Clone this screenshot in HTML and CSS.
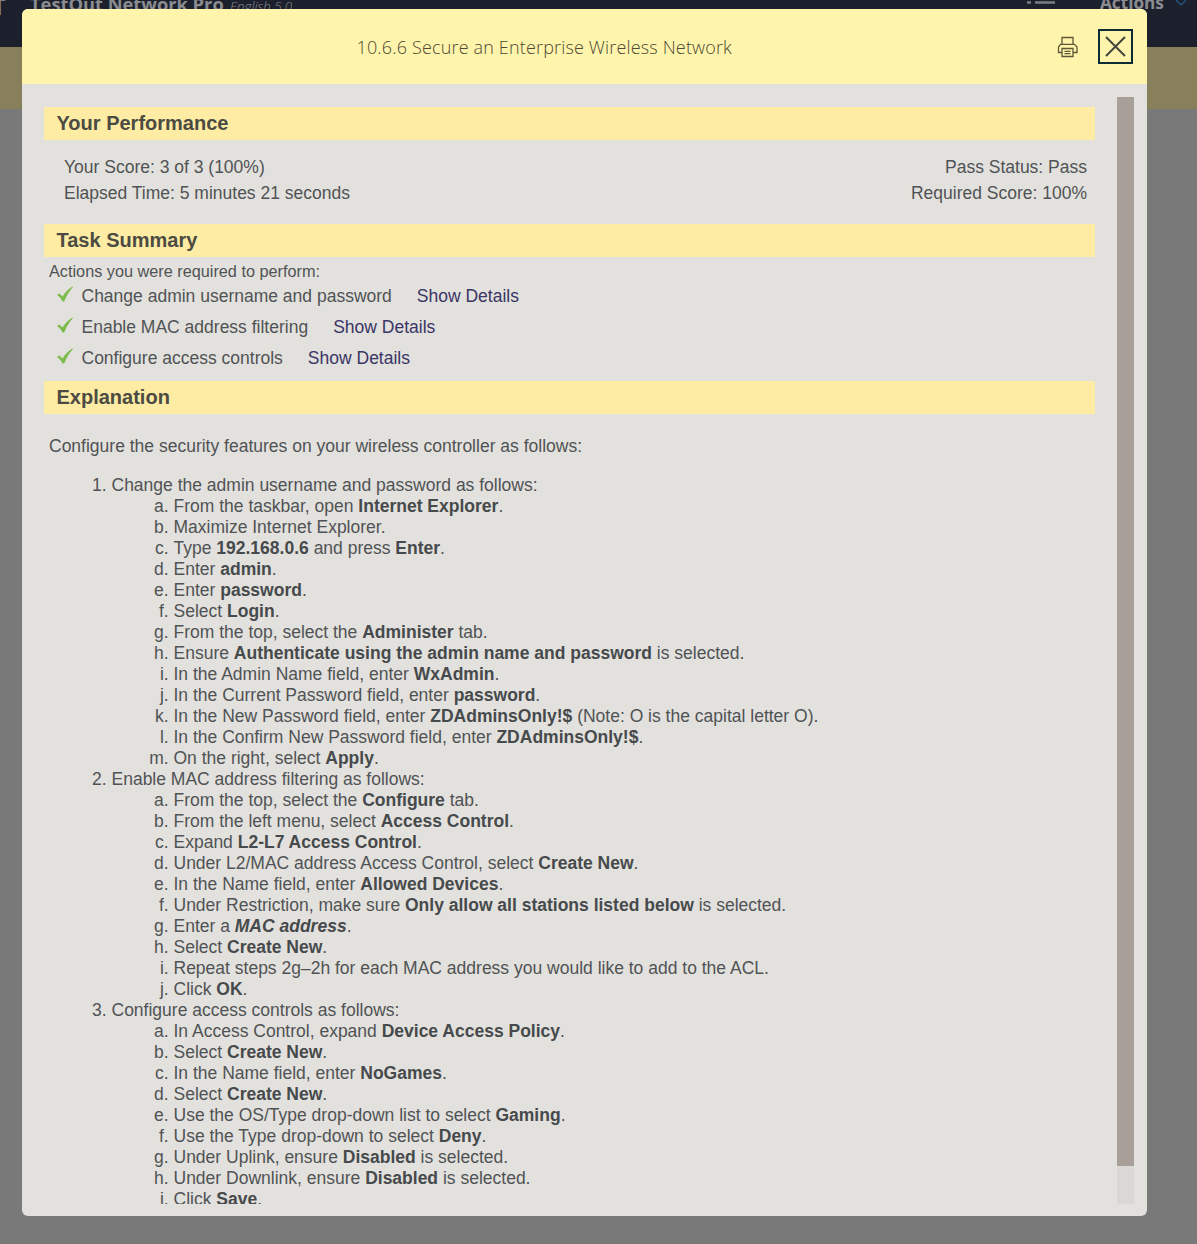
FILE: index.html
```html
<!DOCTYPE html>
<html lang="en">
<head>
<meta charset="utf-8">
<title>10.6.6 Secure an Enterprise Wireless Network</title>
<link rel="stylesheet" href="styles.css">
</head>
<body>
<div class="page">
  <header class="topbar">
    <span class="topbar-mark">T</span>
    <span class="brand">TestOut Network Pro</span>
    <span class="edition">English 5.0</span>
    <svg class="menu-icon" width="28" height="16" viewBox="0 0 28 16"><path d="M0 14.5h4M8 14.5h20" stroke="#7c7e83" stroke-width="2.5"/></svg>
    <span class="actions">Actions</span>
    <svg class="chevron" width="12" height="8" viewBox="0 0 12 8" fill="none"><path d="M1 1l5 5 5-5" stroke="#24507a" stroke-width="1.5"/></svg>
  </header>
  <div class="band"></div>
</div>
<main class="modal">
  <header class="modal-header">
    <h1 class="modal-title">10.6.6 Secure an Enterprise Wireless Network</h1>
    <svg class="print" width="22" height="22" viewBox="0 0 22 22" fill="none" stroke="#5c5736" stroke-width="1.3"><path d="M5 8V1.500h11V8M5 16.500H1.500v-5.500L3.500 8.300h14L20 11v5.500h-4"/><path d="M5 12.500h11v8H5zM7.500 15.300h6M7.500 17.700h6"/></svg>
    <button class="close" aria-label="Close"><svg width="21" height="21" viewBox="0 0 21 21"><path d="M1 1l19 19M20 1L1 20" stroke="#45453f" stroke-width="2"/></svg></button>
  </header>
  <div class="modal-body">
    <div class="content">
      <h2 class="section">Your Performance</h2>
      <div class="scores">
        <div>Your Score: 3 of 3 (100%)<br>Elapsed Time: 5 minutes 21 seconds</div>
        <div class="scores-right">Pass Status: Pass<br>Required Score: 100%</div>
      </div>
      <h2 class="section">Task Summary</h2>
      <p class="required">Actions you were required to perform:</p>
      <ul class="tasks">
        <li class="task"><svg class="check" width="17" height="16" viewBox="0 0 17 16"><path d="M0 9L2.500 7.500l3 3C8.300 6 12 2.500 15.500.5L16 1C12.500 5 9.500 9.500 7.200 15.500H5.500C4 12.500 2.500 10.500 0 9z" fill="#7bbb4b"/></svg><span>Change admin username and password</span><a class="details">Show Details</a></li>
        <li class="task"><svg class="check" width="17" height="16" viewBox="0 0 17 16"><path d="M0 9L2.500 7.500l3 3C8.300 6 12 2.500 15.500.5L16 1C12.500 5 9.500 9.500 7.200 15.500H5.500C4 12.500 2.500 10.500 0 9z" fill="#7bbb4b"/></svg><span>Enable MAC address filtering</span><a class="details">Show Details</a></li>
        <li class="task"><svg class="check" width="17" height="16" viewBox="0 0 17 16"><path d="M0 9L2.500 7.500l3 3C8.300 6 12 2.500 15.500.5L16 1C12.500 5 9.500 9.500 7.200 15.500H5.500C4 12.500 2.500 10.500 0 9z" fill="#7bbb4b"/></svg><span>Configure access controls</span><a class="details">Show Details</a></li>
      </ul>
      <h2 class="section">Explanation</h2>
      <p class="intro">Configure the security features on your wireless controller as follows:</p>
      <ol class="steps">
        <li>Change the admin username and password as follows:
          <ol class="substeps">
            <li>From the taskbar, open <b>Internet Explorer</b>.</li>
            <li>Maximize Internet Explorer.</li>
            <li>Type <b>192.168.0.6</b> and press <b>Enter</b>.</li>
            <li>Enter <b>admin</b>.</li>
            <li>Enter <b>password</b>.</li>
            <li>Select <b>Login</b>.</li>
            <li>From the top, select the <b>Administer</b> tab.</li>
            <li>Ensure <b>Authenticate using the admin name and password</b> is selected.</li>
            <li>In the Admin Name field, enter <b>WxAdmin</b>.</li>
            <li>In the Current Password field, enter <b>password</b>.</li>
            <li>In the New Password field, enter <b>ZDAdminsOnly!$</b> (Note: O is the capital letter O).</li>
            <li>In the Confirm New Password field, enter <b>ZDAdminsOnly!$</b>.</li>
            <li>On the right, select <b>Apply</b>.</li>
          </ol>
        </li>
        <li>Enable MAC address filtering as follows:
          <ol class="substeps">
            <li>From the top, select the <b>Configure</b> tab.</li>
            <li>From the left menu, select <b>Access Control</b>.</li>
            <li>Expand <b>L2-L7 Access Control</b>.</li>
            <li>Under L2/MAC address Access Control, select <b>Create New</b>.</li>
            <li>In the Name field, enter <b>Allowed Devices</b>.</li>
            <li>Under Restriction, make sure <b>Only allow all stations listed below</b> is selected.</li>
            <li>Enter a <b><i>MAC address</i></b>.</li>
            <li>Select <b>Create New</b>.</li>
            <li>Repeat steps 2g–2h for each MAC address you would like to add to the ACL.</li>
            <li>Click <b>OK</b>.</li>
          </ol>
        </li>
        <li>Configure access controls as follows:
          <ol class="substeps">
            <li>In Access Control, expand <b>Device Access Policy</b>.</li>
            <li>Select <b>Create New</b>.</li>
            <li>In the Name field, enter <b>NoGames</b>.</li>
            <li>Select <b>Create New</b>.</li>
            <li>Use the OS/Type drop-down list to select <b>Gaming</b>.</li>
            <li>Use the Type drop-down to select <b>Deny</b>.</li>
            <li>Under Uplink, ensure <b>Disabled</b> is selected.</li>
            <li>Under Downlink, ensure <b>Disabled</b> is selected.</li>
            <li>Click <b>Save</b>.</li>
          </ol>
        </li>
      </ol>
    </div>
    <div class="scrollbar"><div class="thumb"></div></div>
  </div>
</main>
</body>
</html>
```
FILE: styles.css
```css
* { box-sizing: border-box; }
body {
  margin: 0;
  height: 1244px;
  overflow: hidden;
  position: relative;
  background: #797979;
  color: #505355;
  font: 17.5px/21px "Liberation Sans", Arial, sans-serif;
}
h1, h2, p, ul, ol { margin: 0; padding: 0; }
.topbar {
  display: flex;
  height: 47px;
  background: #1c202d;
  color: #8b8c90;
  font-family: "Open Sans", sans-serif;
  white-space: nowrap;
}
.topbar > * { flex: none; }
.topbar-mark { width: 36px; margin-left: -6px; font-size: 21px; line-height: 24px; margin-top: -5px; }
.brand { width: 200px; font-size: 18.3px; font-weight: 700; line-height: 24px; margin-top: -8px; }
.edition { font-size: 13.4px; font-style: italic; font-weight: 300; line-height: 18px; margin-top: -3px; }
.menu-icon { margin-left: auto; margin-top: -12px; }
.actions { margin-left: 45px; width: 75px; font-size: 17.2px; font-weight: 700; line-height: 24px; margin-top: -9px; }
.chevron { margin-right: 10px; margin-top: -1px; }
.band { height: 62px; background: #88805b; }
.modal {
  position: absolute;
  left: 22px;
  top: 9px;
  width: 1125px;
  height: 1207px;
  display: flex;
  flex-direction: column;
  border-radius: 6px;
  overflow: hidden;
  background: #e3e1dd;
}
.modal-header {
  display: flex;
  align-items: center;
  flex: none;
  height: 75px;
  padding: 0 14px 0 334.5px;
  background: #fff4ac;
}
.modal-title {
  margin-right: auto;
  color: #4c4934;
  font: 300 18px/26px "Open Sans", sans-serif;
  letter-spacing: 0.16px;
  white-space: nowrap;
}
.print { margin-right: 19px; }
.close {
  display: flex;
  align-items: center;
  justify-content: center;
  width: 35px;
  height: 35px;
  padding: 0;
  border: 2px solid #0b2b35;
  background: none;
}
.modal-body {
  flex: 1;
  min-height: 0;
  display: flex;
  justify-content: space-between;
  padding: 13px 13px 12px 22px;
}
.content { width: 1051px; padding-top: 10px; overflow: hidden; }
.scrollbar { width: 17px; background: #d9d8d5; }
.thumb { height: 1069px; background: #a89f99; }
.section {
  height: 33px;
  padding-left: 12.5px;
  background: #feeca4;
  color: #4b4b43;
  font-size: 20px;
  line-height: 33px;
}
.scores {
  display: flex;
  justify-content: space-between;
  height: 84px;
  padding: 14px 8px 0 20px;
  line-height: 26px;
}
.scores-right { text-align: right; }
.required { padding: 4px 0 1px 5px; font-size: 16.25px; line-height: 20px; }
.tasks { list-style: none; height: 99px; }
.task { display: flex; height: 31px; padding-left: 13px; line-height: 28px; }
.check { margin: 4px 7.5px 0 0; }
.details { margin-left: 25px; color: #3a3566; }
.intro { padding: 22px 0 18px 5px; }
.steps { padding-left: 67.5px; }
.substeps { padding-left: 62px; list-style-type: lower-alpha; }
b { color: #464a4c; }
```
